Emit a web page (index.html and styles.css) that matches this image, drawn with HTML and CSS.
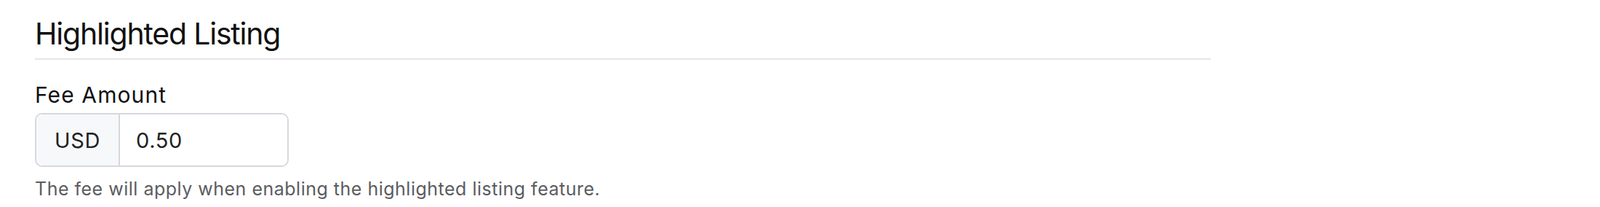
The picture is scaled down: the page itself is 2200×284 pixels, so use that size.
FILE: index.html
```html
<!DOCTYPE html>
<html lang="en">
<head>
    <meta charset="UTF-8">
    <meta name="viewport" content="width=device-width, initial-scale=1.0">
    <title>Highlighted Listing</title>
    <link rel="stylesheet" href="styles.css">
</head>
<body>
    <div class="settings-section">
        <h2 class="section-title">Highlighted Listing</h2>

        <div class="form-field">
            <label class="field-label" for="fee-amount">Fee Amount</label>
            <div class="input-group">
                <span class="input-addon">USD</span>
                <input class="input-control" id="fee-amount" type="text" value="0.50">
            </div>
            <p class="field-help">The fee will apply when enabling the highlighted listing feature.</p>
        </div>
    </div><!-- // settings-section -->
</body>
</html>
```

FILE: styles.css
```css
body {
	margin: 0;
	background-color: #fff;
	font-family: Inter, "Noto Sans", sans-serif;
	color: #111;
}

.settings-section {
	width: 1617px;
	padding: 21px 0 0 48px;
}

	.section-title {
		margin: 0;
		padding-bottom: 9px;
		border-bottom: 2px solid #e6e6eb;
		font-size: 41px;
		line-height: 50px;
		font-weight: 400;
		letter-spacing: -1.2px;
	}

	.form-field {
		margin-top: 30px;
	}

	.field-label {
		display: block;
		font-size: 30px;
		line-height: 36px;
		letter-spacing: 1.1px;
		margin-bottom: 7px;
	}

	.input-group {
		display: flex;
		width: 349px;
		height: 74px;
		box-sizing: border-box;
		border: 2px solid #d6d8de;
		border-radius: 10px;
		overflow: hidden;
	}

		.input-addon {
			display: flex;
			align-items: center;
			justify-content: center;
			width: 113px;
			border-right: 2px solid #d6d8de;
			background-color: #f7f8fa;
			font-size: 29px;
			letter-spacing: 0.6px;
			color: #222;
		}

		.input-control {
			flex: 1;
			min-width: 0;
			border: 0;
			outline: 0;
			padding: 0 0 0 22px;
			font-family: inherit;
			font-size: 29px;
			letter-spacing: 0.6px;
			color: #222;
			background: #fff;
		}

	.field-help {
		margin: 15px 0 0;
		font-size: 25px;
		line-height: 30px;
		letter-spacing: 0.5px;
		color: #5b5c60;
	}
```
